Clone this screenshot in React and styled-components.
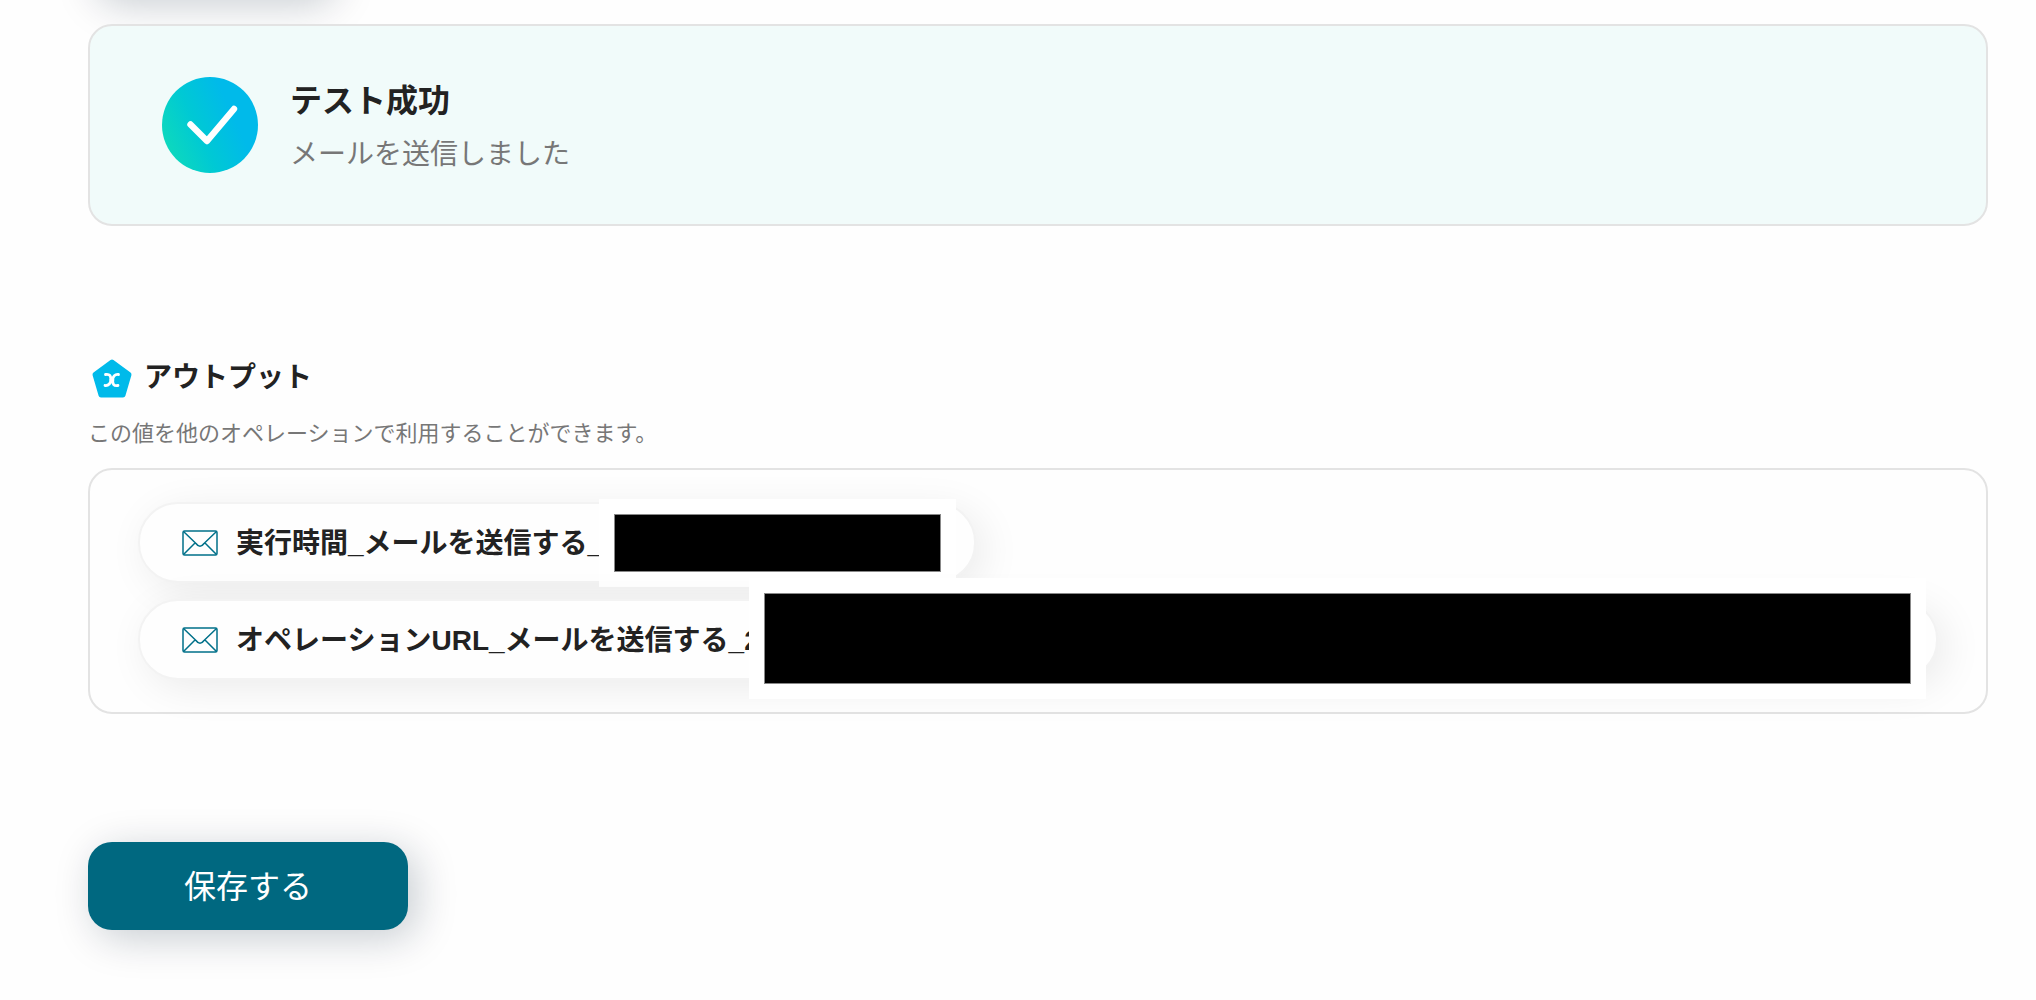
import React from "react";
import styled, { createGlobalStyle } from "styled-components";

const GlobalStyle = createGlobalStyle`
  *, *::before, *::after { box-sizing: border-box; }
  body {
    margin: 0;
    background: #fefefe;
    color: #222;
    font-family: "Liberation Sans", "Noto Sans CJK JP", sans-serif;
  }
  h2, p, ul { margin: 0; padding: 0; }
`;

const Page = styled.main`
  display: flex;
  flex-direction: column;
  min-height: 100vh;
  padding: 0 48px 70px 88px;
  overflow: hidden;
`;

const raised = "8px 8px 40px rgba(6, 28, 48, 0.22)";

const PreviousAction = styled.div`
  width: 240px;
  height: 88px;
  margin: -92px 0 28px;
  border-radius: 24px;
  background: #006880;
  box-shadow: ${raised};
`;

const ResultCard = styled.section`
  position: relative;
  display: flex;
  align-items: center;
  gap: 32px;
  min-height: 202px;
  padding: 48px 72px;
  border: 2px solid #e3e3e3;
  border-radius: 24px;
  background: #f1fbfa;
`;

const ResultText = styled.div`
  display: flex;
  flex-direction: column;
  gap: 12px;
  padding-top: 4px;
`;

const ResultTitle = styled.h2`
  font-size: 32px;
  line-height: 44px;
  font-weight: 700;
`;

const ResultMessage = styled.p`
  font-size: 28px;
  line-height: 40px;
  color: #777;
`;

const Output = styled.section`
  display: flex;
  flex-direction: column;
  margin-top: 130px;
`;

const OutputHeading = styled.div`
  display: flex;
  align-items: center;
  gap: 8px;
`;

const OutputTitle = styled.h2`
  font-size: 28px;
  line-height: 44px;
  font-weight: 700;
`;

const OutputNote = styled.p`
  margin: 17px 0;
  font-size: 22px;
  line-height: 34px;
  color: #777;
`;

const OutputList = styled.ul`
  display: flex;
  flex-direction: column;
  gap: 16px;
  padding: 32px 48px;
  border: 2px solid #e3e3e3;
  border-radius: 24px;
  list-style: none;
`;

const Pill = styled.li`
  position: relative;
  display: flex;
  align-items: center;
  gap: 18px;
  width: ${(p) => p.$width};
  height: 81px;
  padding: 0 42px;
  border: 2px solid #f3f3f3;
  border-radius: 40px;
  background: #fefefe;
  box-shadow: 8px 8px 40px rgba(0, 0, 0, 0.08);
`;

const PillLabel = styled.span`
  padding-top: 2px;
  font-size: 28px;
  line-height: 40px;
  font-weight: 700;
  white-space: nowrap;
`;

const Redaction = styled.span`
  position: absolute;
  top: ${(p) => p.$top};
  bottom: ${(p) => p.$bottom};
  left: ${(p) => p.$left};
  right: ${(p) => p.$right};
  border: 15px solid #fff;
  background: #000;
  box-shadow: inset 0 0 0 1px #888;
`;

const SaveButton = styled.button`
  align-self: flex-start;
  width: 320px;
  height: 88px;
  margin-top: 128px;
  padding: 2px 0 0;
  border: 0;
  border-radius: 24px;
  background: #006880;
  box-shadow: ${raised};
  color: #fff;
  font-family: inherit;
  font-size: 32px;
  line-height: 44px;
  cursor: pointer;
`;

function SuccessIcon() {
  return (
    <svg width="96" height="96" viewBox="0 0 96 96" fill="none" aria-hidden="true">
      <defs>
        <linearGradient id="success" x1="-2" y1="76" x2="86" y2="36" gradientUnits="userSpaceOnUse">
          <stop offset="0" stopColor="#10dcb8" />
          <stop offset="0.45" stopColor="#00c9d4" />
          <stop offset="0.85" stopColor="#00baea" />
        </linearGradient>
      </defs>
      <circle cx="48" cy="48" r="48" fill="url(#success)" />
      <path d="M28.5 47.5 45 64 72 32" stroke="#fff" strokeWidth="6.4" strokeLinecap="round" strokeLinejoin="round" />
    </svg>
  );
}

function VariableIcon() {
  return (
    <svg width="48" height="44" viewBox="0 0 48 44" fill="none" aria-hidden="true">
      <path d="M24 6 41 18.5 35 39H13L7 18.500Z" fill="#00baea" stroke="#00baea" strokeWidth="5" strokeLinejoin="round" />
      <path
        d="M17.500 18.500c5.500-.8 5 2.500 5.500 5.500-.5 3-1.500 6-6 5.500M30.500 18.500c-4.500-.5-5.500 2.500-6 5.500.5 3 0 6.300 5.500 5.500M22.500 24h2.500"
        stroke="#fff"
        strokeWidth="2.800"
        strokeLinecap="round"
        strokeLinejoin="round"
      />
    </svg>
  );
}

function MailIcon() {
  return (
    <svg width="36" height="26" viewBox="0 0 36 26" fill="none" stroke="#007089" strokeWidth="1.500" aria-hidden="true">
      <rect x="1" y="1" width="34" height="24" rx="1.500" />
      <path d="M1.500 1.500 14 13.500c2.500 3.700 5.500 3.700 8 0L34.500 1.500M1.500 24.500 13 13M34.500 24.500 23 13" strokeLinejoin="round" />
    </svg>
  );
}

export default function App() {
  return (
    <>
      <GlobalStyle />
      <Page>
        <PreviousAction aria-hidden="true" />
        <ResultCard>
          <SuccessIcon />
          <ResultText>
            <ResultTitle>テスト成功</ResultTitle>
            <ResultMessage>メールを送信しました</ResultMessage>
          </ResultText>
        </ResultCard>

        <Output>
          <OutputHeading>
            <VariableIcon />
            <OutputTitle>アウトプット</OutputTitle>
          </OutputHeading>
          <OutputNote>この値を他のオペレーションで利用することができます。</OutputNote>
          <OutputList>
            <Pill $width="838px">
              <MailIcon />
              <PillLabel>実行時間_メールを送信する_</PillLabel>
              <Redaction $top="-5px" $bottom="-6px" $left="459px" $right="18px" />
            </Pill>
            <Pill $width="100%">
              <MailIcon />
              <PillLabel>オペレーションURL_メールを送信する_2</PillLabel>
              <Redaction $top="-23px" $bottom="-21px" $left="609px" $right="10px" />
            </Pill>
          </OutputList>
        </Output>

        <SaveButton type="button">保存する</SaveButton>
      </Page>
    </>
  );
}
